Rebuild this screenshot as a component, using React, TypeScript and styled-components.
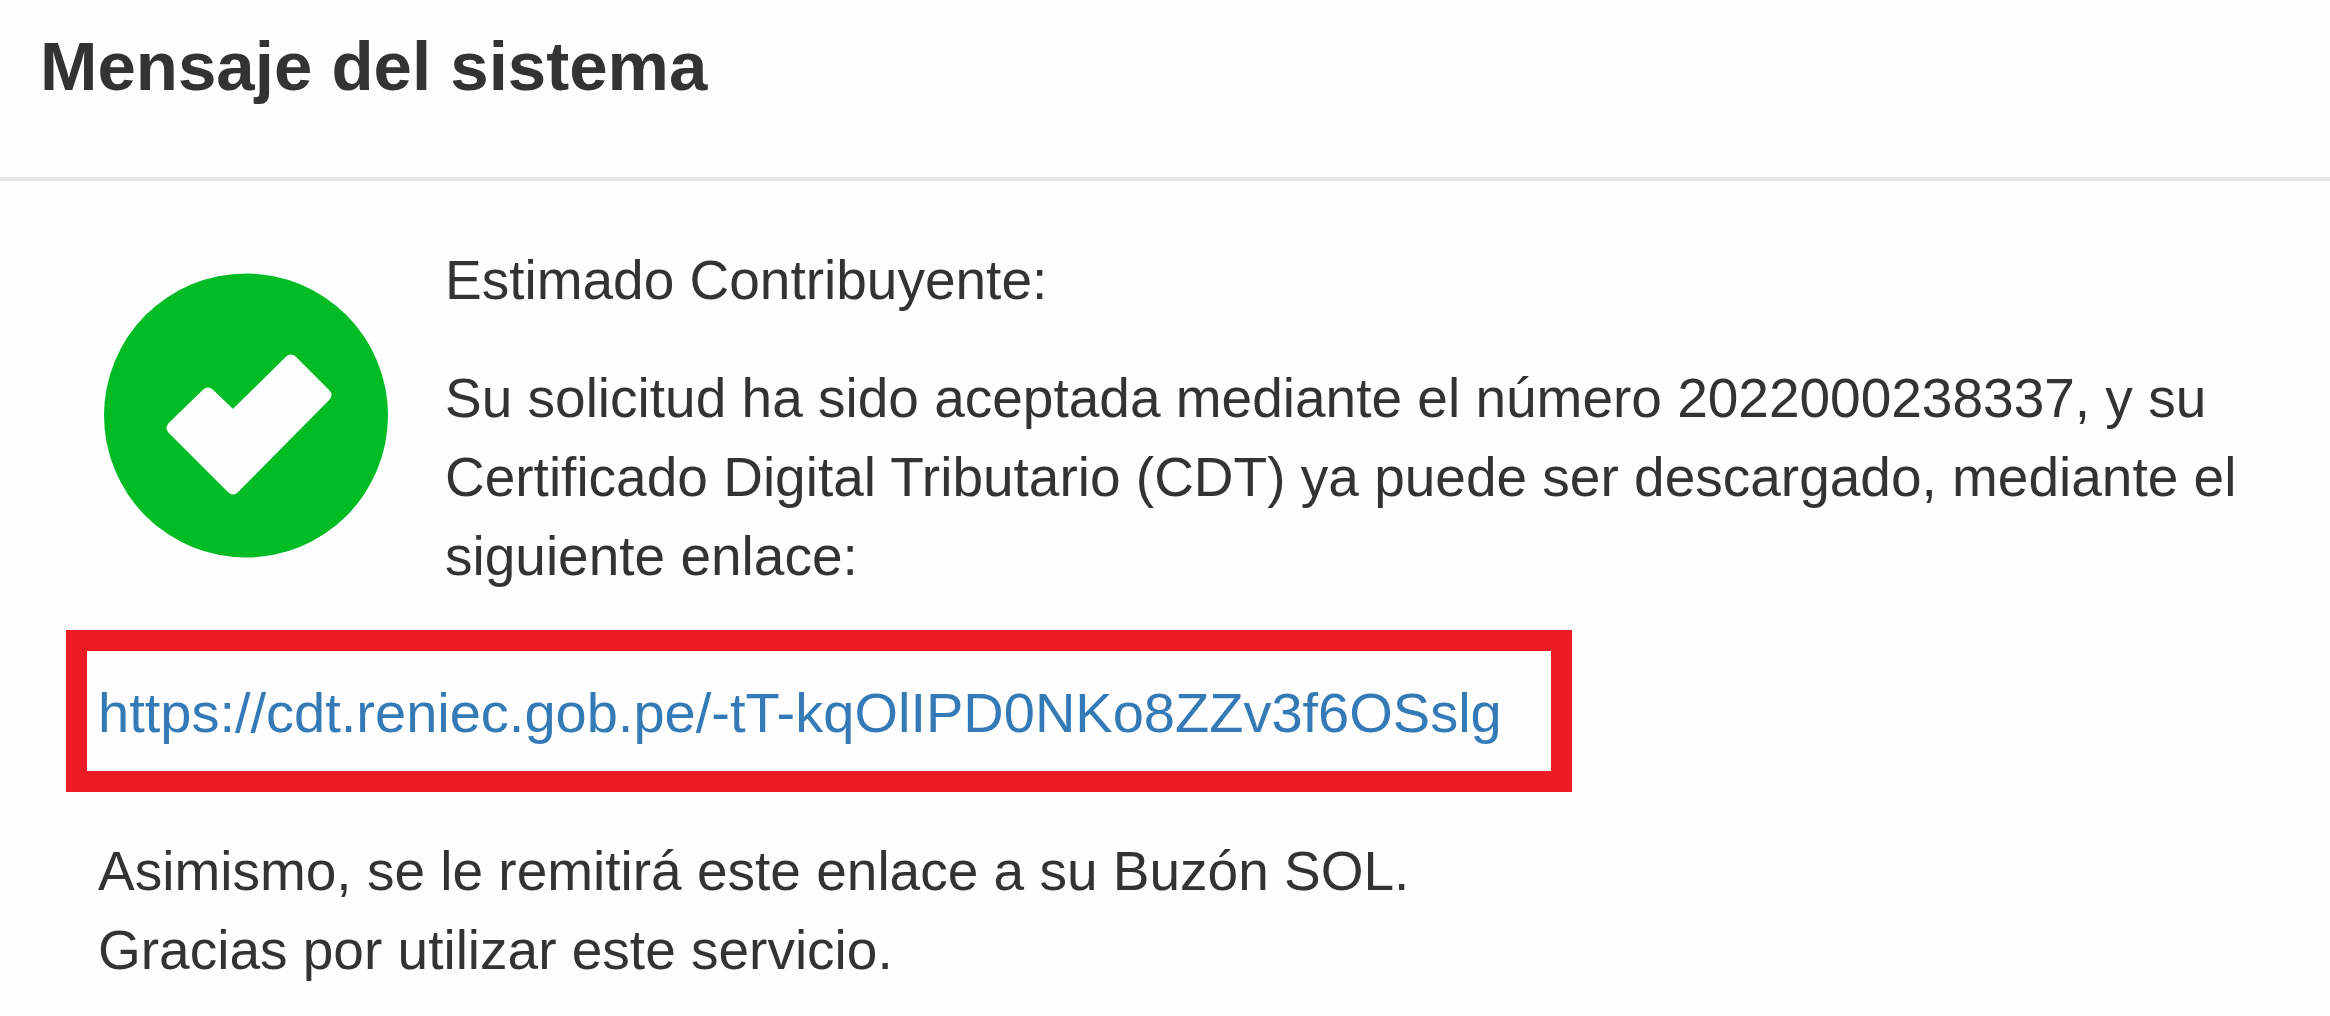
import React from "react";
import styled, { createGlobalStyle } from "styled-components";

const GlobalStyle = createGlobalStyle`
  * { box-sizing: border-box; }
  body {
    margin: 0;
    background: #fefefe;
    color: #333333;
    font-family: "Liberation Sans", Arial, sans-serif;
    font-size: 55px;
    line-height: 79px;
  }
`;

const Header = styled.header`
  padding: 26px 40px 70px;
  border-bottom: 4px solid #e5e5e5;
`;

const Title = styled.h1`
  margin: 0;
  font-size: 69px;
  line-height: 81px;
  font-weight: 700;
`;

const Body = styled.main`
  padding: 60px 66px 24px;
`;

const Notice = styled.section`
  display: flex;
  align-items: flex-start;
  gap: 56px;
  padding-left: 38px;
`;

const StatusIcon = styled.svg`
  flex: none;
  width: 285px;
  height: 285px;
  margin-top: 32px;
`;

const Message = styled.div`
  flex: 1;
  display: grid;
  gap: 39px;
`;

const Paragraph = styled.p`
  margin: 0;
`;

const LinkFrame = styled.div`
  width: fit-content;
  margin: 34px 0 40px;
  padding: 22px 49px 19px 11px;
  border: 21px solid #ed1c24;
`;

const DownloadLink = styled.a`
  display: block;
  color: #337ab7;
  font-size: 56px;
  text-decoration: none;
`;

const Closing = styled.footer`
  padding-left: 32px;
`;

const link = "https://cdt.reniec.gob.pe/-tT-kqOlIPD0NKo8ZZv3f6OSslg";

export default function App() {
  return (
    <>
      <GlobalStyle />
      <Header>
        <Title>Mensaje del sistema</Title>
      </Header>
      <Body>
        <Notice>
          <StatusIcon viewBox="0 0 285 285" role="img" aria-label="Aceptado">
            <circle cx="142" cy="142.500" r="142" fill="#00bc24" />
            <path
              d="M69 155 104 121 129 145 187 88 221 122 129 215Z"
              fill="#fefefe"
              stroke="#fefefe"
              strokeWidth="13"
              strokeLinejoin="round"
            />
          </StatusIcon>
          <Message>
            <Paragraph>Estimado Contribuyente:</Paragraph>
            <Paragraph>
              Su solicitud ha sido aceptada mediante el número 2022000238337, y su
              Certificado Digital Tributario (CDT) ya puede ser descargado, mediante el
              siguiente enlace:
            </Paragraph>
          </Message>
        </Notice>
        <LinkFrame>
          <DownloadLink href={link}>{link}</DownloadLink>
        </LinkFrame>
        <Closing>
          <Paragraph>Asimismo, se le remitirá este enlace a su Buzón SOL.</Paragraph>
          <Paragraph>Gracias por utilizar este servicio.</Paragraph>
        </Closing>
      </Body>
    </>
  );
}
